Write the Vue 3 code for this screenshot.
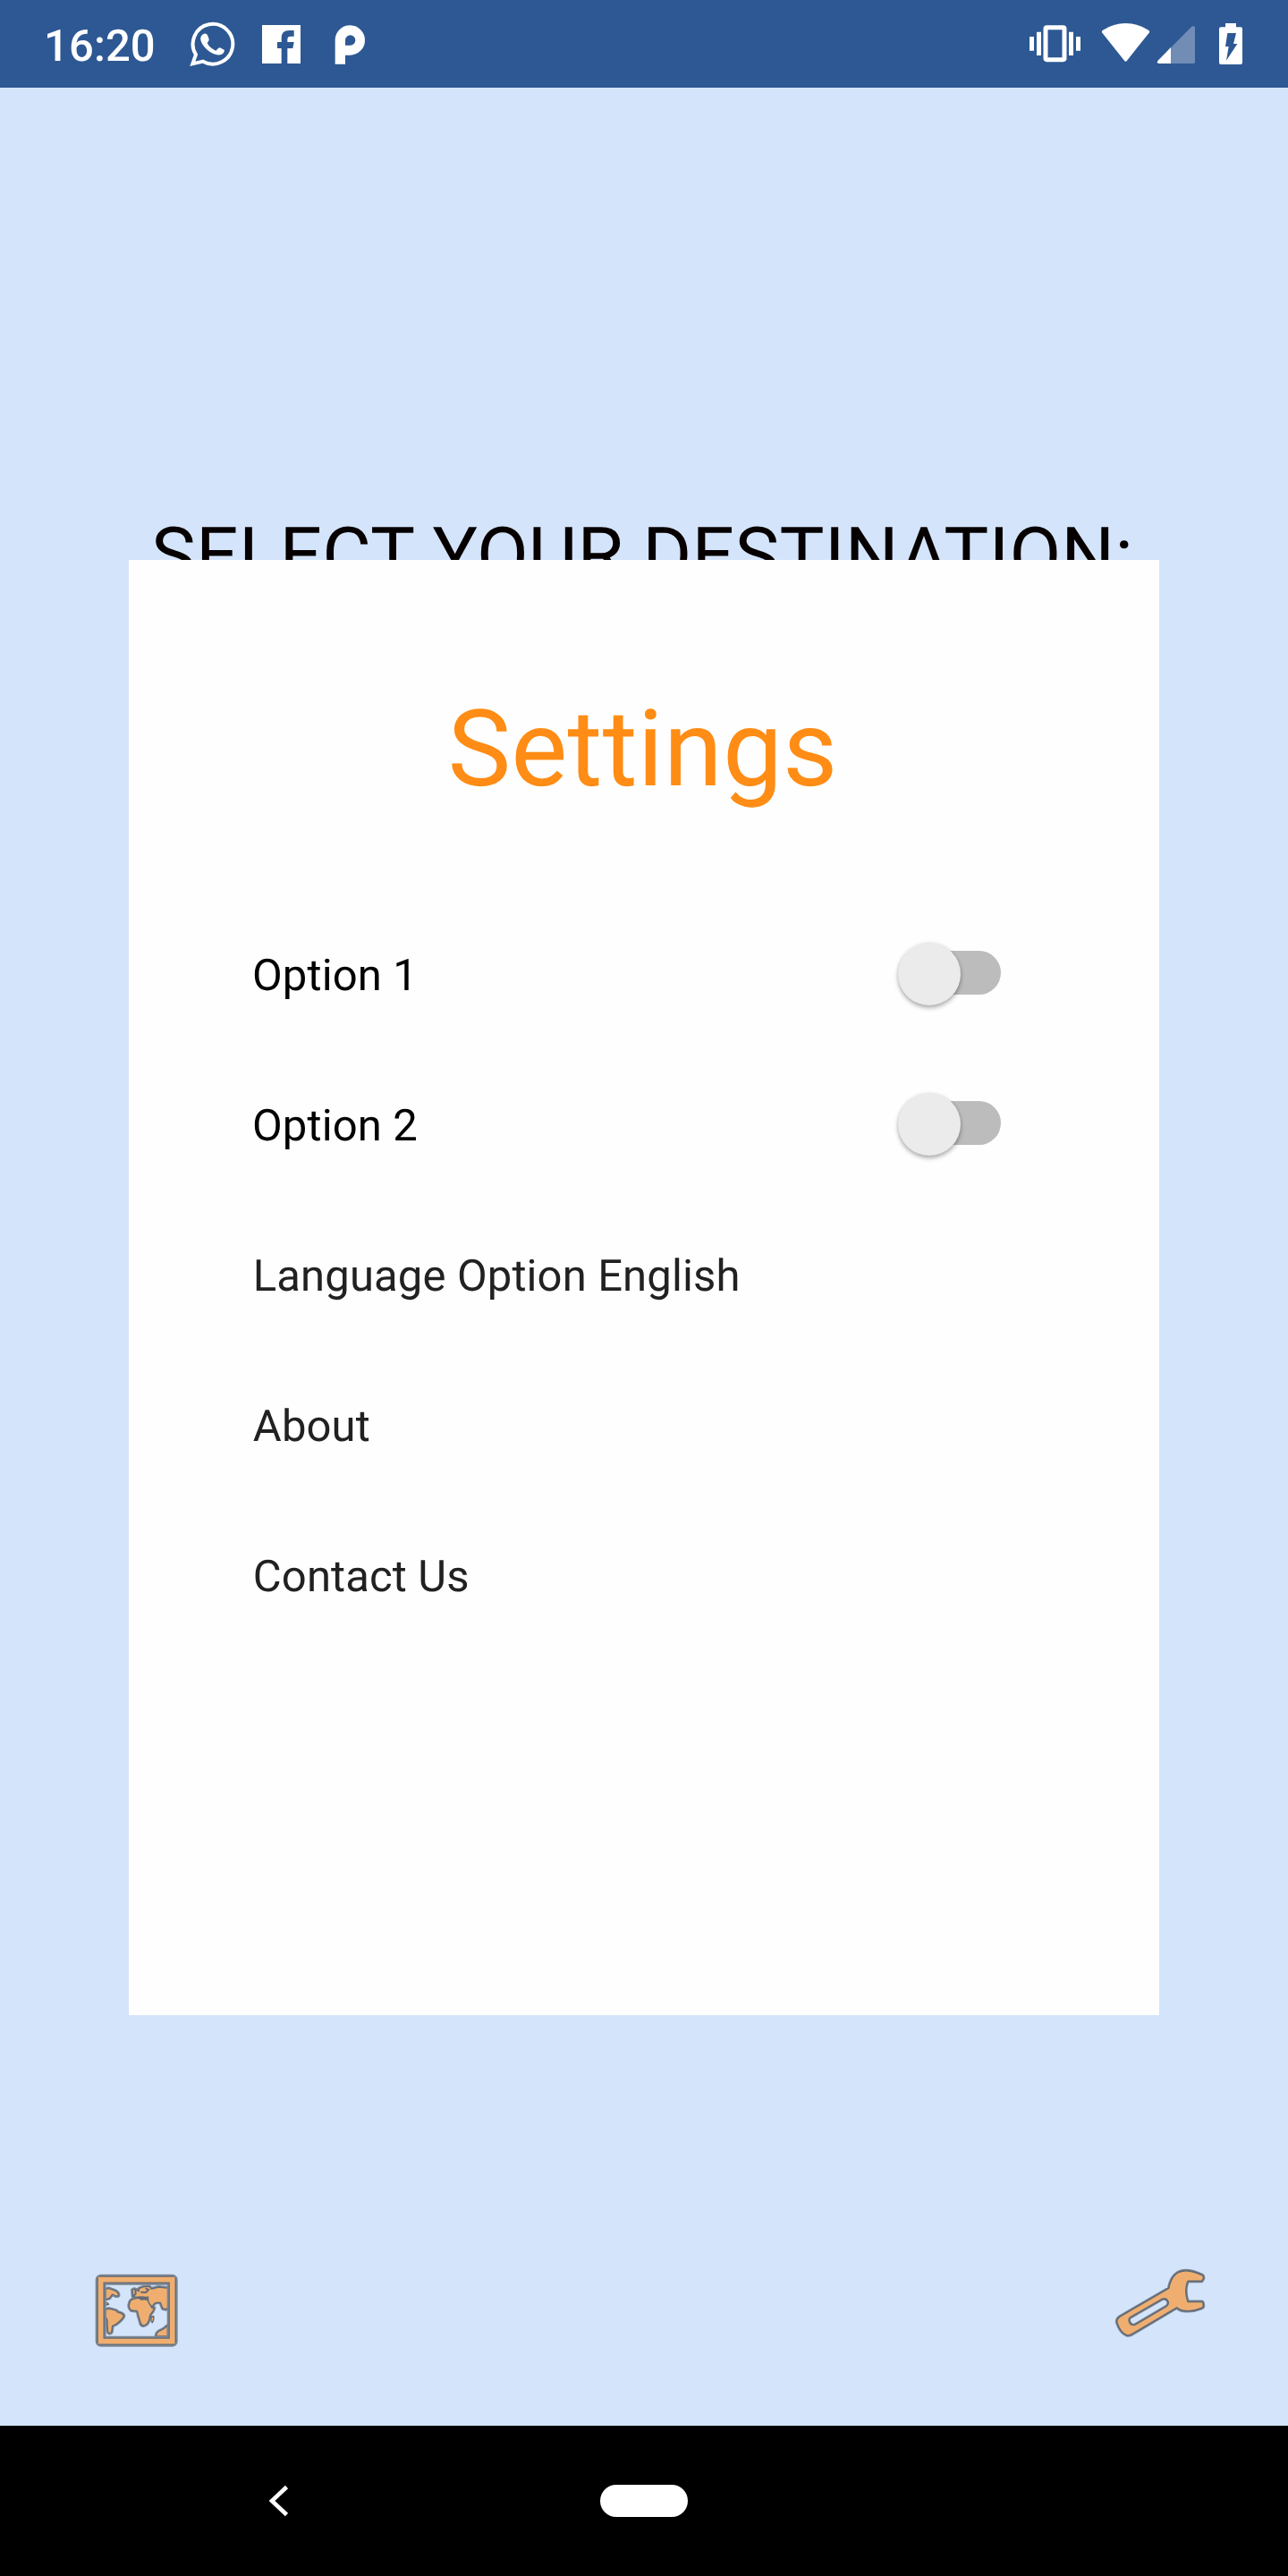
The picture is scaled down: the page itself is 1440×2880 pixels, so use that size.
<script setup>
import { ref } from 'vue'

const options = ref([
  { label: 'Option 1', enabled: false },
  { label: 'Option 2', enabled: false },
])
const links = ['Language Option English', 'About', 'Contact Us']
</script>

<template>
  <div class="screen">
    <header class="status">
      <span class="clock">16:20</span>
      <svg class="whatsapp" viewBox="636 70 156 156">
        <path d="M646 215L657 184A67 67 0 1 1 681 207Z" fill="none" stroke="#fff" stroke-width="12" />
        <path d="M682 115q10-5 14 4l5 13q1 5-6 13q9 18 29 26q10-11 14-10l15 8q-2 14-15 16q-21 2-41-15q-21-19-24-35q-2-13 9-20z" fill="#fff" />
      </svg>
      <svg class="facebook" viewBox="879 84 129 129">
        <path d="M879 84h129v129h-44v-51h18l4-21h-22v-9q0-10 10-10h12v-20h-16q-26 0-26 25v14h-14v21h14v51h-65z" fill="#fff" />
      </svg>
      <svg class="parking" viewBox="1122 82 105 135">
        <path fill-rule="evenodd" d="M1124 216v-82a50 50 0 1 1 50 52h-16v30zM1158 153h17a17 17 0 1 0-17-17z" fill="#fff" />
      </svg>
      <div class="system">
        <svg class="vibrate" viewBox="60 80 177 129">
          <rect x="117" y="91" width="63" height="108" rx="4" fill="none" stroke="#fff" stroke-width="15" />
          <path d="M63 122h15v47H63zM87 106h15v79H87zM195 106h15v79h-15zM219 122h15v47h-15z" fill="#fff" />
        </svg>
        <svg class="wifi" viewBox="303 76 165 135">
          <path d="M307 111Q303 106 309 102Q345 79 385.500 79T462 102Q468 106 464 111L390 204Q385.500 210 381 204Z" fill="#fff" />
        </svg>
        <svg class="signal" viewBox="489 84 132 132">
          <path d="M494 203L607 89Q617 83 618 93V208Q618 213 613 213H497Q488 211 494 203Z" fill="#718db6" />
          <path d="M494 203L537 159V213H497Q488 211 494 203Z" fill="#fff" />
        </svg>
        <svg class="battery" viewBox="696 75 84 144">
          <path fill-rule="evenodd" d="M720 78h36v13h15q6 0 6 6v113q0 6-6 6h-66q-6 0-6-6V97q0-6 6-6h15zM727 111h29l-9 36h13l-37 56l8-47h-11z" fill="#fff" />
        </svg>
      </div>
    </header>

    <main class="stage">
      <h1 class="heading">SELECT YOUR DESTINATION:</h1>

      <section class="dialog">
        <h2 class="title">Settings</h2>
        <label v-for="option in options" :key="option.label" class="row option">
          <span>{{ option.label }}</span>
          <span class="switch" :class="{ on: option.enabled }"><span class="thumb"></span></span>
        </label>
        <div v-for="link in links" :key="link" class="row link">{{ link }}</div>
      </section>

      <div class="tools">
        <svg class="map" viewBox="45 62 287 254">
          <g fill="none" stroke="#7d8794" stroke-width="12" stroke-linejoin="round">
            <path d="M84 118L94 114L118 123Q129 130 127 139L119 140L107 134L97 147L84 151Z" />
            <path d="M84 185Q95 181 102 184L120 189L124 194Q142 198 145 206Q143 214 131 225Q120 236 107 240L104 261Q96 269 92 260L90 232Q92 219 84 210Z" />
            <path d="M166 160Q168 152 178 150L190 147Q198 146 203 152L218 151Q226 153 229 162L240 180L247 180Q244 192 234 202L229 222Q224 237 210 239Q202 238 201 228L194 205Q193 194 189 189Q180 190 171 188Q162 182 163 170Z" />
            <path d="M176 142L174 120Q182 114 188 120L196 124L196 115Q210 107 230 108L238 116L262 110L296 114V178L286 184L276 182L268 162Q258 160 248 164L240 176L228 164L226 146Q206 140 190 144Z" />
            <path d="M254 275Q254 263 265 257Q281 251 292 239V275Z" />
          </g>
          <g fill="#efae6f" stroke="#626b76" stroke-width="4" stroke-linejoin="round">
            <path d="M84 118L94 114L118 123Q129 130 127 139L119 140L107 134L97 147L84 151Z" />
            <path d="M84 162L91 163L95 168L84 170Z" />
            <path d="M84 185Q95 181 102 184L120 189L124 194Q142 198 145 206Q143 214 131 225Q120 236 107 240L104 261Q96 269 92 260L90 232Q92 219 84 210Z" />
            <path d="M176 142L174 120Q182 114 188 120L196 124L196 115Q210 107 230 108L238 116L262 110L296 114V178L286 184L276 182L268 162Q258 160 248 164L240 176L228 164L226 146Q206 140 190 144Z" />
            <path d="M166 160Q168 152 178 150L190 147Q198 146 203 152L218 151Q226 153 229 162L240 180L247 180Q244 192 234 202L229 222Q224 237 210 239Q202 238 201 228L194 205Q193 194 189 189Q180 190 171 188Q162 182 163 170Z" />
            <path d="M238 209L245 207Q248 219 241 229Q234 224 238 209Z" />
            <path d="M254 275Q254 263 265 257Q281 251 292 239V275Z" />
          </g>
          <path d="M184 121L185 132L178 140M204 127L219 128L228 119L220 115M194 144Q210 151 226 144" fill="none" stroke="#626b76" stroke-width="6" stroke-linecap="round" />
          <path fill="none" stroke="#7d8794" stroke-width="36" stroke-linejoin="round" d="M68 85H308V292H68Z" />
          <path fill="none" stroke="#626b76" stroke-width="25" stroke-linejoin="round" d="M68 85H308V292H68Z" />
          <path fill="none" stroke="#efae6f" stroke-width="17" d="M68 85H308V292H68Z" />
        </svg>
        <svg class="wrench" viewBox="45 42 312 238">
          <g fill-rule="evenodd" stroke-linejoin="round">
            <path class="halo" d="M230 112C237 75 257 53 288 53Q310 53 343 68Q348 72 346 80L341 88H294Q281 119 294 157H341Q347 159 346 174L340 179Q313 190 287 188Q269 187 257 177L110 264Q100 272 88 269Q67 261 56 226Q55 214 66 207ZM100 210Q94 216 98 226Q103 238 116 235L222 173Q231 166 228 157Q223 144 210 147Z" />
            <path class="body" d="M230 112C237 75 257 53 288 53Q310 53 343 68Q348 72 346 80L341 88H294Q281 119 294 157H341Q347 159 346 174L340 179Q313 190 287 188Q269 187 257 177L110 264Q100 272 88 269Q67 261 56 226Q55 214 66 207ZM100 210Q94 216 98 226Q103 238 116 235L222 173Q231 166 228 157Q223 144 210 147Z" />
          </g>
        </svg>
      </div>
    </main>

    <nav class="navbar">
      <svg class="back" viewBox="0 0 24 36">
        <path d="M20.500 2.500L4 18L20.500 33.500" fill="none" stroke="#fff" stroke-width="4.600" />
      </svg>
      <span class="home"></span>
      <span class="spacer"></span>
    </nav>
  </div>
</template>

<style>
body {
  margin: 0;
}
</style>

<style scoped>
.screen {
  width: 1440px;
  height: 2880px;
  display: flex;
  flex-direction: column;
  font-family: Roboto, sans-serif;
  text-rendering: geometricPrecision;
  background: #d4e4fa;
  overflow: hidden;
}
.status {
  height: 98px;
  box-sizing: border-box;
  display: flex;
  align-items: flex-start;
  padding: 0 50px 0 49px;
  background: #2d5893;
}
.clock {
  width: 163px;
  margin-top: 23px;
  font-size: 49px;
  line-height: 57px;
  font-weight: 500;
  letter-spacing: 0.1px;
  color: #fff;
}
.whatsapp {
  width: 52px;
  height: 52px;
  margin-top: 23.3px;
}
.facebook {
  width: 43px;
  height: 43px;
  margin: 28px 0 0 29px;
}
.parking {
  width: 35px;
  height: 45px;
  margin: 27.3px 0 0 38px;
}
.system {
  display: flex;
  margin-left: auto;
}
.vibrate {
  width: 59px;
  height: 43px;
  margin-top: 26.7px;
}
.wifi {
  width: 55px;
  height: 45px;
  margin: 25.3px 0 0 22px;
}
.signal {
  width: 44px;
  height: 44px;
  margin: 28px 0 0 7px;
}
.battery {
  width: 28px;
  height: 48px;
  margin: 25px 0 0 25px;
}
.stage {
  position: relative;
  flex: 1;
  display: flex;
  flex-direction: column;
  justify-content: space-between;
}
.heading {
  margin: 474px 4px 0 0;
  font-size: 84px;
  line-height: 98px;
  font-weight: 400;
  letter-spacing: 0.14px;
  text-align: center;
  white-space: nowrap;
  color: #060000;
}
.dialog {
  position: absolute;
  top: 528px;
  left: 144px;
  width: 1152px;
  height: 1627px;
  box-sizing: border-box;
  padding: 143px 177px 0 138px;
  background: #fefefe;
}
.title {
  margin: 0 -36px 97px 0;
  font-size: 119px;
  line-height: 140px;
  font-weight: 400;
  letter-spacing: 0.2px;
  text-align: center;
  color: #ff8c15;
}
.row {
  height: 168px;
  display: flex;
  align-items: center;
  justify-content: space-between;
  font-size: 49px;
  letter-spacing: 0.13px;
  color: #212121;
}
.option {
  color: #000;
}
.link {
  padding-left: 0.8px;
}
.switch {
  width: 112px;
  height: 49px;
  border-radius: 25px;
  margin-bottom: 5px;
  display: flex;
  align-items: center;
  background: linear-gradient(to right, transparent 32px, #bcbcbc 32px);
}
.switch.on {
  justify-content: flex-end;
}
.thumb {
  width: 70px;
  height: 70px;
  flex: none;
  margin: 2px 0 0 -3.5px;
  border-radius: 50%;
  background: #ebebeb;
  box-shadow: 0 3px 5px rgba(0, 0, 0, 0.3), 0 0 4px rgba(0, 0, 0, 0.08);
}
.tools {
  display: flex;
  justify-content: space-between;
  align-items: flex-start;
  padding: 0 91px 86px 105px;
}
.map {
  width: 95.7px;
  height: 84.7px;
  margin-top: 6.7px;
}
.wrench {
  width: 104px;
  height: 79.3px;
}
.halo {
  fill: none;
  stroke: #7d8794;
  stroke-width: 11;
}
.body {
  fill: #efae6f;
  stroke: #626b76;
  stroke-width: 5;
}
.navbar {
  height: 168px;
  box-sizing: border-box;
  display: flex;
  align-items: center;
  justify-content: space-between;
  padding: 0 300px;
  background: #000;
}
.back,
.spacer {
  width: 24px;
  height: 36px;
}
.home {
  width: 98px;
  height: 35.5px;
  border-radius: 18px;
  background: #fff;
}
</style>
